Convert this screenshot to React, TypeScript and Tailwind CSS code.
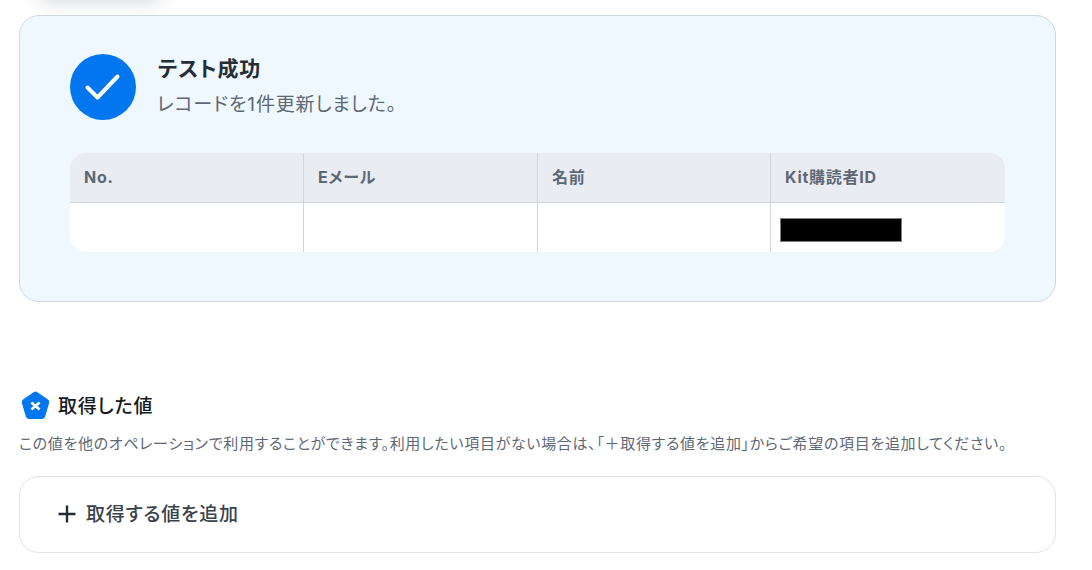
const font = { fontFamily: 'Inter, "Noto Sans CJK JP", "Noto Sans", sans-serif' };

function Cell({ children, w, last, head }: { children?: React.ReactNode; w: string; last?: boolean; head?: boolean }) {
  return (
    <div className={`${w} flex items-center ${last ? "" : "border-r border-[#d0d5de]"} ${head ? "pl-[14px] pb-[2px] text-[16px] tracking-[0.75px] font-bold text-[#5e6875] border-b bg-[#e9ecf1] border-b-[#d0d5de] h-[50px]" : "pl-[9px] h-[49px] bg-white"}`}>
      {children}
    </div>
  );
}

export default function App() {
  return (
    <div style={font} className="relative w-[1092px] h-[570px] overflow-hidden bg-white pl-[19px] pr-[36px] pt-[15px] [font-feature-settings:'palt']">
      <div className="absolute left-[40px] top-[-30px] w-[120px] h-[30px] bg-[#9aa0a8] blur-[10px] opacity-50" />
      <div className="relative h-[287px] rounded-[20px] border border-[#d0d8e4] bg-[#eff7ff] pl-[50px] pr-[50px] pt-[38px]">
        <div className="flex items-start gap-[21px]">
          <div className="w-[66px] h-[66px] rounded-full bg-[#0276ee] flex items-center justify-center">
            <svg width="38" height="30" viewBox="0 0 38 30" fill="none">
              <path d="M3.5 15.5 L13.5 25.5 L33.5 4.5" stroke="white" strokeWidth="4" strokeLinecap="round" strokeLinejoin="round" />
            </svg>
          </div>
          <div className="flex flex-col">
            <div className="text-[21px] leading-[30px] tracking-[0.9px] pl-[1px] font-bold text-[#262d36]">テスト成功</div>
            <div className="text-[19px] leading-[26px] mt-[8px] tracking-[0.85px] text-[#5e6875]">レコードを1件更新しました。</div>
          </div>
        </div>
        <div className="mt-[33px] w-[935px] rounded-[16px] overflow-hidden">
          <div className="flex">
            <Cell head w="w-[234px]">No.</Cell>
            <Cell head w="w-[234px]">Eメール</Cell>
            <Cell head w="w-[233px]">名前</Cell>
            <Cell head last w="w-[234px]">Kit購読者ID</Cell>
          </div>
          <div className="flex">
            <Cell w="w-[234px]" />
            <Cell w="w-[234px]" />
            <Cell w="w-[233px]" />
            <Cell last w="w-[234px]">
              <div className="w-[122px] h-[24px] mt-[5px] bg-black border border-[#808080]" />
            </Cell>
          </div>
        </div>
      </div>

      <div className="flex items-center mt-[88px] h-[30px] pl-[2px] gap-[8px]">
        <svg width="29" height="29" viewBox="0 0 29 29">
          <path d="M12.6 1.2 Q14.5 0 16.4 1.2 L27 8.6 Q28.8 10 28.1 12 L24.2 25.6 Q23.5 28 21.2 28 L7.8 28 Q5.5 28 4.8 25.6 L0.9 12 Q0.2 10 2 8.6 Z" fill="#0276ee" />
          <path d="M10.4 11.4 L18.6 18.6 M18.6 11.4 L10.4 18.6" stroke="white" strokeWidth="2.6" />
        </svg>
        <div className="text-[19px] pt-[5px] pl-[0px] tracking-[0.8px] font-medium text-[#16191d]">取得した値</div>
      </div>
      <div className="mt-[14px] text-[15px] leading-[20px] tracking-[0.68px] text-[#5e6875] whitespace-nowrap">
        この値を他のオペレーションで利用することができます。利用したい項目がない場合は、「＋取得する値を追加」からご希望の項目を追加してください。
      </div>
      <div className="mt-[22px] h-[77px] rounded-[20px] border border-[#e2e4e8] bg-white flex items-center pl-[38px] gap-[10px]">
        <svg className="mb-[2px]" width="18" height="18" viewBox="0 0 18 18" fill="none">
          <path d="M9 0.5 V17.5 M0.5 9 H17.5" stroke="#262d36" strokeWidth="2.4" />
        </svg>
        <div className="text-[19px] pt-[2px] tracking-[0.75px] font-medium text-[#3a424c]">取得する値を追加</div>
      </div>
    </div>
  );
}
